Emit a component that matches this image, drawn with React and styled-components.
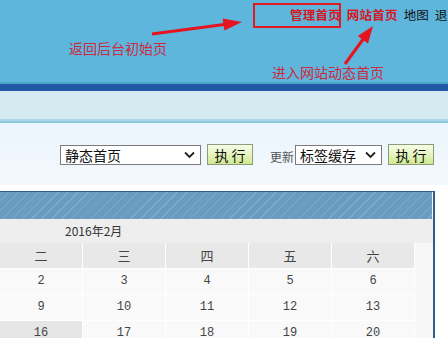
import React from "react";
import styled, { createGlobalStyle } from "styled-components";

const Global = createGlobalStyle`
  html, body { margin: 0; padding: 0; background: #fff; }
  body {
    width: 448px; height: 338px; overflow: hidden;
    font-family: "Noto Sans CJK SC", "Liberation Sans", sans-serif;
    font-size: 12px; color: #333;
  }
  * { box-sizing: border-box; }
`;

const Page = styled.div`
  width: 448px;
  display: flex;
  flex-direction: column;
`;

const Header = styled.header`
  position: relative;
  height: 82px;
  background: #5eb6dd;
`;

const Nav = styled.nav`
  display: flex;
  align-items: center;
  gap: 6px;
  padding: 7px 0 0 290px;
  white-space: nowrap;
  line-height: 16px;
`;

const NavLink = styled.a`
  font-size: 12.5px;
  letter-spacing: 0.2px;
  font-weight: ${p => (p.$hot ? 700 : 400)};
  color: ${p => (p.$hot ? "#d6171f" : "#111")};
  text-decoration: none;
`;

const MarkBox = styled.div`
  position: absolute;
  left: 253px;
  top: 3px;
  width: 88px;
  height: 25px;
  border: 2px solid #e11a1f;
`;

const Note = styled.span`
  position: absolute;
  left: ${p => p.$x}px;
  top: ${p => p.$y}px;
  font-size: 14px;
  line-height: 16px;
  color: #cc2a40;
  white-space: nowrap;
`;

const Arrows = styled.svg`
  position: absolute;
  left: 0;
  top: 0;
  pointer-events: none;
`;

const ThinStripe = styled.div`
  height: 2px;
  background: #4aa6c6;
`;

const DarkBand = styled.div`
  height: 7px;
  background: #2158a4;
`;

const LightBand = styled.div`
  height: 28px;
  background: #d6eaf2;
`;

const Rule = styled.div`
  height: 4px;
  border-top: 2px solid #a9d8e8;
  border-bottom: 2px solid #8ec8dc;
`;

const Toolbar = styled.div`
  height: 62px;
  display: flex;
  align-items: center;
  padding: 1px 0 0 60px;
  background: linear-gradient(#ecf5fd, #f3f8fd);
`;

const SelectWrap = styled.div`
  position: relative;
  width: ${p => p.$w}px;
  height: 20px;
  margin-left: ${p => p.$ml || 0}px;
`;

const Select = styled.select`
  appearance: none;
  width: 100%;
  height: 100%;
  border: 1px solid #7b7b7b;
  background: #fff;
  font-family: "Noto Sans CJK SC", sans-serif;
  font-size: 14px;
  line-height: 18px;
  color: #111;
  padding: 0 0 0 4px;
  border-radius: 0;
  outline: none;
`;

const Chevron = styled.svg`
  position: absolute;
  right: 6px;
  top: 6px;
  pointer-events: none;
`;

const Button = styled.button`
  width: 46px;
  height: 21px;
  margin-left: ${p => p.$ml || 0}px;
  padding: 0 0 0 3px;
  border: 1px solid #8d9b76;
  background: linear-gradient(#f6fbe8 0%, #e8f5c4 45%, #cfe98e 100%);
  font-family: "Noto Sans CJK SC", sans-serif;
  font-size: 14px;
  letter-spacing: 3px;
  line-height: 18px;
  color: #111;
  border-radius: 0;
`;

const Label = styled.span`
  margin-left: 17px;
  font-size: 12px;
  color: #555;
  line-height: 20px;
  padding-top: 4px;
`;

const Gap = styled.div`
  height: 6px;
  background: #fff;
`;

const Panel = styled.section`
  width: 435px;
  border-top: 1px solid #2d5f8a;
  border-right: 2px solid #2d5f8a;
  background: #f7f7f7;
  overflow: hidden;
  height: 160px;
`;

const PanelHead = styled.div`
  height: 27px;
  margin-right: 1px;
  background: repeating-linear-gradient(
    135deg,
    #6a9cc1 0px,
    #6a9cc1 6px,
    #80abcb 6px,
    #80abcb 7px
  );
`;

const MonthRow = styled.div`
  height: 24px;
  background: #eeeeee;
  padding-left: 65px;
  line-height: 24px;
  font-size: 12px;
  color: #333;
`;

const Grid = styled.div`
  display: grid;
  grid-template-columns: repeat(5, 82px);
  column-gap: 1px;
  row-gap: 1px;
  width: 415px;
  background: #fff;
`;

const HeadCell = styled.div`
  height: 25px;
  background: #e8e8e8;
  text-align: center;
  line-height: 25px;
  font-size: 13px;
  color: #444;
`;

const DayCell = styled.div`
  height: 25px;
  background: ${p => (p.$today ? "#e6e6e6" : "#f9f9f9")};
  text-align: center;
  line-height: 25px;
  font-family: "Liberation Mono", "DejaVu Sans Mono", monospace;
  font-size: 12px;
  color: #444;
`;

const weekdays = ["二", "三", "四", "五", "六"];
const weeks = [
  [2, 3, 4, 5, 6],
  [9, 10, 11, 12, 13],
  [16, 17, 18, 19, 20],
];

function Caret() {
  return (
    <Chevron width="11" height="8" viewBox="0 0 11 8">
      <path d="M1 1.5 L5.5 6 L10 1.5" fill="none" stroke="#222" strokeWidth="1.8" />
    </Chevron>
  );
}

export default function App() {
  return (
    <Page>
      <Global />
      <Header>
        <Nav>
          <NavLink $hot href="#">管理首页</NavLink>
          <NavLink $hot href="#">网站首页</NavLink>
          <NavLink href="#">地图</NavLink>
          <NavLink href="#">退出</NavLink>
        </Nav>
        <MarkBox />
        <Note $x={69} $y={40}>返回后台初始页</Note>
        <Note $x={272} $y={64}>进入网站动态首页</Note>
        <Arrows width="448" height="82" viewBox="0 0 448 82">
          <line x1="152" y1="34" x2="226" y2="24.3" stroke="#e5141e" strokeWidth="3" />
          <polygon points="242,22 224.4,30.6 222.6,18.4" fill="#e5141e" />
          <line x1="345" y1="64" x2="364" y2="38" stroke="#e5141e" strokeWidth="3" />
          <polygon points="373,26 368,43.5 357.8,36" fill="#e5141e" />
        </Arrows>
      </Header>
      <ThinStripe />
      <DarkBand />
      <LightBand />
      <Rule />
      <Toolbar>
        <SelectWrap $w={141}>
          <Select defaultValue="静态首页">
            <option>静态首页</option>
          </Select>
          <Caret />
        </SelectWrap>
        <Button $ml={6}>执行</Button>
        <Label>更新</Label>
        <SelectWrap $w={87} $ml={1}>
          <Select defaultValue="标签缓存">
            <option>标签缓存</option>
          </Select>
          <Caret />
        </SelectWrap>
        <Button $ml={6}>执行</Button>
      </Toolbar>
      <Gap />
      <Panel>
        <PanelHead />
        <MonthRow>2016年2月</MonthRow>
        <Grid>
          {weekdays.map(d => (
            <HeadCell key={d}>{d}</HeadCell>
          ))}
          {weeks.flat().map((n, i) => (
            <DayCell key={i} $today={n === 16}>{n}</DayCell>
          ))}
        </Grid>
      </Panel>
    </Page>
  );
}
